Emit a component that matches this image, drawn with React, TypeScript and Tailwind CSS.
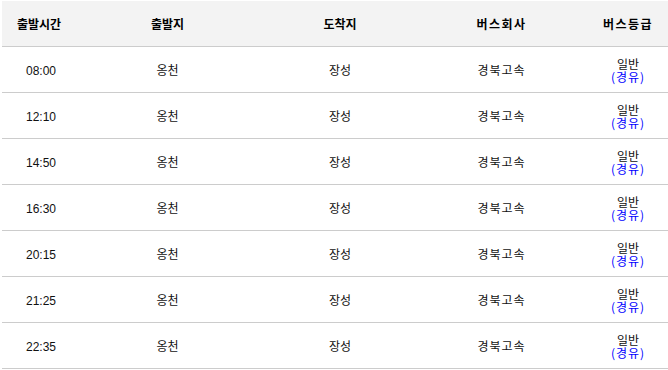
const rows = [
  { time: '08:00' },
  { time: '12:10' },
  { time: '14:50' },
  { time: '16:30' },
  { time: '20:15' },
  { time: '21:25' },
  { time: '22:35' },
]

const cols = 'grid grid-cols-[78px_175px_170px_153px_100px]'

export default function App() {
  return (
    <div className="w-[668px] h-[370px] overflow-hidden bg-white pt-px pl-[2px]" style={{ fontFamily: '"Noto Sans CJK KR", "Noto Sans", sans-serif' }}>
      <div className="w-[676px]">
        {/* header */}
        <div className={`${cols} h-[46px] bg-[#f3f3f3] border-b border-[#cccccc] text-[12px] font-bold text-black`}>
          <div className="flex items-center justify-center pr-[4px]">출발시간</div>
          <div className="flex items-center justify-center">출발지</div>
          <div className="flex items-center justify-center">도착지</div>
          <div className="flex items-center justify-center tracking-[1.5px]">버스회사</div>
          <div className="flex items-center justify-center tracking-[1.5px]">버스등급</div>
        </div>

        {rows.map((r) => (
          <div key={r.time} className={`${cols} h-[46px] border-b border-[#cccccc] text-[12px] text-[#111]`}>
            <div className="flex items-center justify-center pt-[2px]" style={{ fontFamily: '"Liberation Sans", sans-serif' }}>{r.time}</div>
            <div className="flex items-center justify-center">옹천</div>
            <div className="flex items-center justify-center">장성</div>
            <div className="flex items-center justify-center tracking-[1px]">경북고속</div>
            <div className="flex flex-col items-center justify-center leading-[13px]">
              <span>일반</span>
              <span className="text-[#0000ff] tracking-[1px]">(경유)</span>
            </div>
          </div>
        ))}
      </div>
    </div>
  )
}
